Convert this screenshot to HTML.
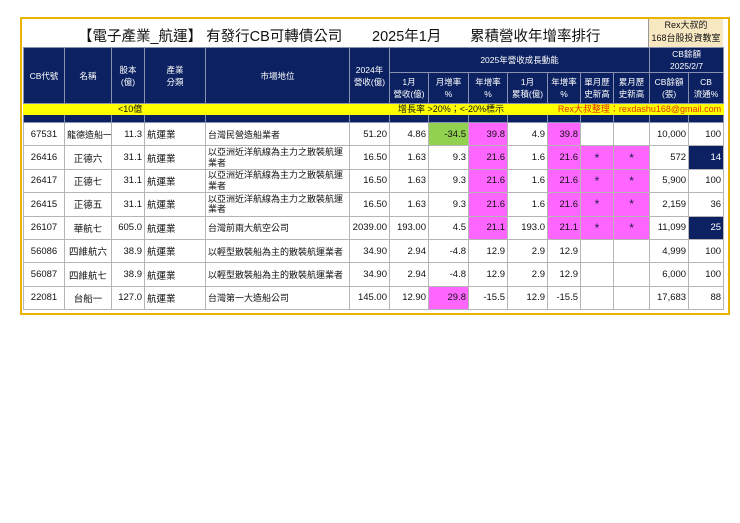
<!DOCTYPE html>
<html><head><meta charset="utf-8">
<style>
body{margin:0;background:#fff;width:740px;height:523px;position:relative;font-family:"Liberation Sans","Noto Sans CJK TC",sans-serif;}
.frame{position:absolute;left:20px;top:17px;width:706px;height:294px;border:2px solid #e8b400;background:#fff;}
.title{position:absolute;left:23px;top:20px;width:625px;height:27px;font-size:14.5px;color:#111;}
.title span{position:absolute;top:5px;white-space:nowrap;}
.rex{position:absolute;left:648px;top:19px;width:74px;height:28px;background:#f8e8c2;border-left:1px solid #999;font-size:9px;text-align:center;line-height:13px;color:#111;}
table{position:absolute;left:23px;top:47px;border-collapse:collapse;table-layout:fixed;width:699px;}
td{border:1px solid #b5b5b5;padding:0 2px;font-size:9.5px;color:#111;overflow:hidden;white-space:nowrap;}
.h td{background:#0b2161;color:#fff;text-align:center;font-size:8.5px;line-height:12px;border-color:#8892b0;}
.y td{background:#ffff00;height:10px;font-size:9px;line-height:10px;border-color:#ffff00;}
.n td{background:#0b2161;height:7px;border-color:#8892b0;}
.d td{height:22.4px;}
.r{text-align:right}.c{text-align:center}
.pk{background:#ff66ff}.gr{background:#92d050}.nv{background:#0b2161;color:#fff !important;}
.w{white-space:normal;line-height:10.5px;font-size:9px}
.m{font-size:9px}
.st{text-align:center;font-size:12px;color:#1a1a4a}
</style></head><body>
<div class="frame"></div>
<div class="title"><span style="left:55px">【電子產業_航運】 有發行CB可轉債公司</span><span style="left:349px">2025年1月</span><span style="left:447px">累積營收年增率排行</span></div>
<div class="rex">Rex大叔的<br>168台股投資教室</div>
<table>
<colgroup><col style="width:41px"><col style="width:47px"><col style="width:33px"><col style="width:61px"><col style="width:144px"><col style="width:40px"><col style="width:39px"><col style="width:40px"><col style="width:39px"><col style="width:40px"><col style="width:33px"><col style="width:33px"><col style="width:36px"><col style="width:39px"><col style="width:35px"></colgroup>
<tr class="h" style="height:23px"><td rowspan="2">CB代號</td><td rowspan="2">名稱</td><td rowspan="2">股本<br>(億)</td><td rowspan="2">產業<br>分類</td><td rowspan="2">市場地位</td><td rowspan="2">2024年<br>營收(億)</td><td colspan="7">2025年營收成長動能</td><td colspan="2">CB餘額<br>2025/2/7</td></tr>
<tr class="h" style="height:31px"><td>1月<br>營收(億)</td><td>月增率<br>%</td><td>年增率<br>%</td><td>1月<br>累積(億)</td><td>年增率<br>%</td><td>單月歷<br>史新高</td><td>累月歷<br>史新高</td><td>CB餘額<br>(張)</td><td>CB<br>流通%</td></tr>
<tr class="y"><td></td><td></td><td colspan="3" style="padding-left:6px">&lt;10億</td><td></td><td colspan="4" style="padding-left:8px">增長率 &gt;20%；&lt;-20%標示</td><td colspan="5" style="color:#e03000;text-align:right;padding-right:2px">Rex大叔整理：rexdashu168@gmail.com</td></tr>
<tr class="n"><td></td><td></td><td></td><td></td><td></td><td></td><td></td><td></td><td></td><td></td><td></td><td></td><td></td><td></td><td></td></tr>
<tr class="d"><td class="c">67531</td><td class="c m">龍德造船一</td><td class="r">11.3</td><td>航運業</td><td class="m">台灣民營造船業者</td><td class="r">51.20</td><td class="r">4.86</td><td class="r gr">-34.5</td><td class="r pk">39.8</td><td class="r">4.9</td><td class="r pk">39.8</td><td></td><td></td><td class="r">10,000</td><td class="r">100</td></tr>
<tr class="d"><td class="c">26416</td><td class="c">正德六</td><td class="r">31.1</td><td>航運業</td><td class="w">以亞洲近洋航線為主力之散裝航運業者</td><td class="r">16.50</td><td class="r">1.63</td><td class="r">9.3</td><td class="r pk">21.6</td><td class="r">1.6</td><td class="r pk">21.6</td><td class="st pk">*</td><td class="st pk">*</td><td class="r">572</td><td class="r nv">14</td></tr>
<tr class="d"><td class="c">26417</td><td class="c">正德七</td><td class="r">31.1</td><td>航運業</td><td class="w">以亞洲近洋航線為主力之散裝航運業者</td><td class="r">16.50</td><td class="r">1.63</td><td class="r">9.3</td><td class="r pk">21.6</td><td class="r">1.6</td><td class="r pk">21.6</td><td class="st pk">*</td><td class="st pk">*</td><td class="r">5,900</td><td class="r">100</td></tr>
<tr class="d"><td class="c">26415</td><td class="c">正德五</td><td class="r">31.1</td><td>航運業</td><td class="w">以亞洲近洋航線為主力之散裝航運業者</td><td class="r">16.50</td><td class="r">1.63</td><td class="r">9.3</td><td class="r pk">21.6</td><td class="r">1.6</td><td class="r pk">21.6</td><td class="st pk">*</td><td class="st pk">*</td><td class="r">2,159</td><td class="r">36</td></tr>
<tr class="d"><td class="c">26107</td><td class="c">華航七</td><td class="r">605.0</td><td>航運業</td><td class="m">台灣前兩大航空公司</td><td class="r">2039.00</td><td class="r">193.00</td><td class="r">4.5</td><td class="r pk">21.1</td><td class="r">193.0</td><td class="r pk">21.1</td><td class="st pk">*</td><td class="st pk">*</td><td class="r">11,099</td><td class="r nv">25</td></tr>
<tr class="d"><td class="c">56086</td><td class="c">四維航六</td><td class="r">38.9</td><td>航運業</td><td class="m">以輕型散裝船為主的散裝航運業者</td><td class="r">34.90</td><td class="r">2.94</td><td class="r">-4.8</td><td class="r">12.9</td><td class="r">2.9</td><td class="r">12.9</td><td></td><td></td><td class="r">4,999</td><td class="r">100</td></tr>
<tr class="d"><td class="c">56087</td><td class="c">四維航七</td><td class="r">38.9</td><td>航運業</td><td class="m">以輕型散裝船為主的散裝航運業者</td><td class="r">34.90</td><td class="r">2.94</td><td class="r">-4.8</td><td class="r">12.9</td><td class="r">2.9</td><td class="r">12.9</td><td></td><td></td><td class="r">6,000</td><td class="r">100</td></tr>
<tr class="d"><td class="c">22081</td><td class="c">台船一</td><td class="r">127.0</td><td>航運業</td><td class="m">台灣第一大造船公司</td><td class="r">145.00</td><td class="r">12.90</td><td class="r pk">29.8</td><td class="r">-15.5</td><td class="r">12.9</td><td class="r">-15.5</td><td></td><td></td><td class="r">17,683</td><td class="r">88</td></tr>
</table>
</body></html>
